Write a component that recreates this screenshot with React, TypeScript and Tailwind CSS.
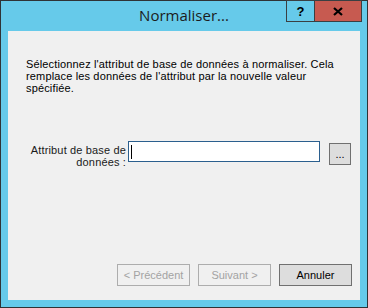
import React from "react";

const ui = { fontFamily: '"Liberation Sans", Arial, sans-serif' };
const title = { fontFamily: '"Open Sans", "Noto Sans", sans-serif' };

export default function App() {
  return (
    <div className="w-[368px] h-[308px] bg-[#f0f0f0]">
      <div className="relative w-[368px] h-[308px] border border-[#2f3336] bg-[#66caea] flex flex-col">
        {/* title bar */}
        <div className="h-[30px] flex items-center justify-center">
          <span className="text-[15px] text-[#1c1c1c] leading-none pb-[2px]" style={title}>
            Normaliser...
          </span>
        </div>
        <div className="absolute top-[-1px] right-[5px] flex h-[22px]">
          <div className="w-[29px] h-full border border-[#3a3f42] bg-[#66caea] flex items-center justify-center">
            <span className="text-[13px] font-bold text-black leading-none" style={ui}>?</span>
          </div>
          <div className="w-[47px] h-full border border-l-0 border-[#3a3f42] bg-[#c75a50] flex items-center justify-center">
            <svg width="10" height="9" viewBox="0 0 10 9">
              <path d="M1 1 L9 8 M9 1 L1 8" stroke="#000" strokeWidth="2.2" />
            </svg>
          </div>
        </div>

        {/* client area */}
        <div className="mx-[7px] mb-[7px] flex-1 bg-[#f0f0f0] flex flex-col text-[11px] text-black" style={ui}>
          <p className="ml-[18px] w-[312px] pt-[27px] leading-[12px] tracking-[0.15px]">
            Sélectionnez l'attribut de base de données à normaliser. Cela remplace les données de l'attribut par la nouvelle valeur spécifiée.
          </p>

          <div className="mt-[47px] flex items-start">
            <div className="w-[118px] text-right leading-[12px] pt-[3px] tracking-[0.15px] text-[#1a1a1a]">
              Attribut de base de<br />données :
            </div>
            <div className="ml-[2px] w-[192px] h-[21px] border border-[#2b5f8e] bg-white flex items-center pl-[2px]">
              <div className="w-px h-[14px] bg-black" />
            </div>
            <div className="ml-[9px] mt-[2px] w-[22px] h-[22px] border border-[#707070] bg-[#dddddd] flex items-end justify-center pb-[4px] leading-none">
              ...
            </div>
          </div>

          <div className="mt-auto mb-[14px] flex justify-end gap-[8px] pr-[8px]">
            <div className="w-[73px] h-[22px] border border-[#adadad] flex items-center justify-center text-[#a3a3a3]">
              &lt; Précédent
            </div>
            <div className="w-[73px] h-[22px] border border-[#adadad] flex items-center justify-center text-[#a3a3a3]">
              Suivant &gt;
            </div>
            <div className="w-[73px] h-[22px] border border-[#707070] bg-[#dddddd] flex items-center justify-center">
              Annuler
            </div>
          </div>
        </div>
      </div>
    </div>
  );
}
